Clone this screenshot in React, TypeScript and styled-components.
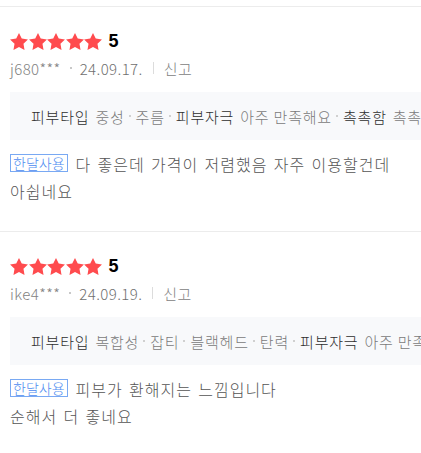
import { FunctionComponent, Fragment } from "react";
import styled, { createGlobalStyle } from "styled-components";

const GlobalStyle = createGlobalStyle`
  html, body {
    margin: 0;
    padding: 0;
    background: #fff;
  }
  body {
    font-family: "Noto Sans CJK KR", "Noto Sans", sans-serif;
    overflow: hidden;
  }
`;

const List = styled.div`
  width: 421px;
  padding-top: 6px;
  overflow: hidden;
`;

const ReviewItem = styled.div`
  border-top: 1px solid #ececec;
  padding: 25px 0 26px 10px;
`;

const RatingRow = styled.div`
  display: flex;
  align-items: center;
  height: 18px;
`;

const Stars = styled.div`
  display: flex;
  gap: 0.6px;
`;

const StarIcon = styled.svg`
  width: 18px;
  height: 17px;
  display: block;
`;

const Score = styled.span`
  margin-left: 6px;
  font-family: "Liberation Sans", Arial, sans-serif;
  font-weight: 700;
  font-size: 18px;
  line-height: 18px;
  color: #000;
`;

const MetaRow = styled.div`
  display: flex;
  align-items: center;
  margin-top: 8px;
  height: 20px;
  font-size: 15px;
  font-weight: 300;
  letter-spacing: 0.4px;
  color: #828282;
`;

const MetaDot = styled.span`
  width: 2px;
  height: 2px;
  background: #c8c8c8;
  margin: 0 8px 0 9px;
`;

const MetaBar = styled.span`
  width: 1px;
  height: 12px;
  background: #dcdcdc;
  margin: 0 10px;
`;

const MetaDate = styled.span`
  color: #6f6f6f;
`;

const Summary = styled.div`
  margin-top: 14px;
  height: 48px;
  background: #f8f9fb;
  padding-left: 21px;
  display: flex;
  align-items: center;
  white-space: nowrap;
  overflow: hidden;
  font-size: 15px;
  font-weight: 300;
  letter-spacing: 0.8px;
`;

const Label = styled.span`
  color: #2e2e2e;
  margin-right: 6px;
`;

const Value = styled.span`
  color: #7a7a7a;
`;

const SumDot = styled.span`
  flex: none;
  width: 2px;
  height: 2px;
  background: #d0d0d0;
  margin: 0 5px 0 4px;
`;

const Body = styled.div`
  margin-top: 11px;
  font-size: 16px;
  font-weight: 300;
  letter-spacing: 1px;
  word-spacing: 1.8px;
  line-height: 27px;
  color: #555;
  padding-right: 10px;
`;

const Tag = styled.span`
  display: inline-block;
  vertical-align: 2px;
  border: 1px solid #79a9f3;
  color: #4d8cf0;
  font-size: 14px;
  letter-spacing: 0;
  line-height: 16px;
  padding: 0 2px;
  margin-right: 8px;
`;

const Star = () => (
  <StarIcon viewBox="2 2 20 19.02">
    <polygon
      fill="#ff4b4e"
      points="12,2 15.09,8.26 22,9.27 17,14.14 18.18,21.02 12,17.77 5.82,21.02 7,14.14 2,9.27 8.91,8.26"
    />
  </StarIcon>
);

type Part = { label?: string; value?: string };

type Review = {
  user: string;
  date: string;
  parts: Part[];
  lines: string[];
};

const reviews: Review[] = [
  {
    user: "j680***",
    date: "24.09.17.",
    parts: [
      { label: "피부타입", value: "중성" },
      { value: "주름" },
      { label: "피부자극", value: "아주 만족해요" },
      { label: "촉촉함", value: "촉촉해요" },
    ],
    lines: ["다 좋은데 가격이 저렴했음 자주 이용할건데", "아쉽네요"],
  },
  {
    user: "ike4***",
    date: "24.09.19.",
    parts: [
      { label: "피부타입", value: "복합성" },
      { value: "잡티" },
      { value: "블랙헤드" },
      { value: "탄력" },
      { label: "피부자극", value: "아주 만족해요" },
    ],
    lines: ["피부가 환해지는 느낌입니다", "순해서 더 좋네요"],
  },
];

const App: FunctionComponent = () => {
  return (
    <>
      <GlobalStyle />
      <List>
        {reviews.map((r) => (
          <ReviewItem key={r.user}>
            <RatingRow>
              <Stars>
                {[0, 1, 2, 3, 4].map((i) => (
                  <Star key={i} />
                ))}
              </Stars>
              <Score>5</Score>
            </RatingRow>
            <MetaRow>
              <span>{r.user}</span>
              <MetaDot />
              <MetaDate>{r.date}</MetaDate>
              <MetaBar />
              <span>신고</span>
            </MetaRow>
            <Summary>
              {r.parts.map((p, i) => (
                <Fragment key={i}>
                  {i > 0 && <SumDot />}
                  {p.label && <Label>{p.label}</Label>}
                  {p.value && <Value>{p.value}</Value>}
                </Fragment>
              ))}
            </Summary>
            <Body>
              <Tag>한달사용</Tag>
              {r.lines[0]}
              <br />
              {r.lines[1]}
            </Body>
          </ReviewItem>
        ))}
      </List>
    </>
  );
};

export default App;
